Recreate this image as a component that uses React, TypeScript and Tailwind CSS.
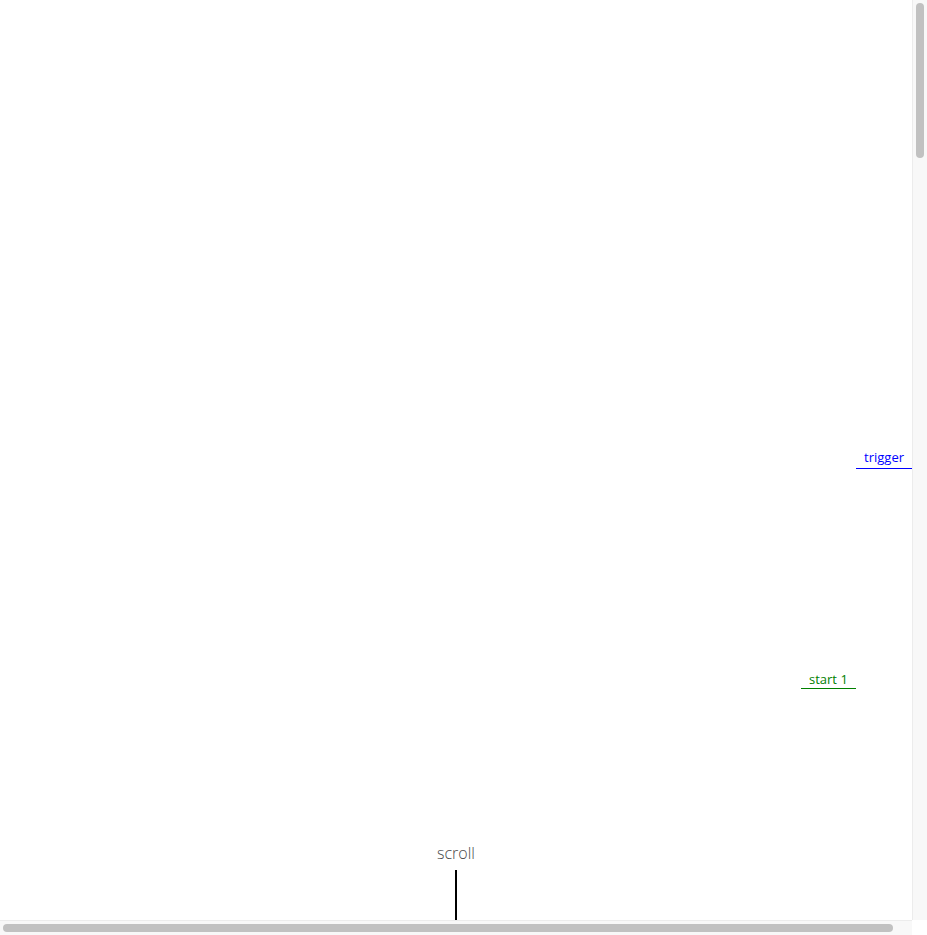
export default function App() {
  return (
    <div className="flex h-[935px] w-[927px] flex-col overflow-hidden bg-white font-['Open_Sans',sans-serif]">
      <div className="flex h-[920px] flex-row">
        {/* page content */}
        <div className="relative flex flex-1 flex-col items-center justify-end">
          {/* trigger marker */}
          <div className="absolute right-0 top-[444px] whitespace-nowrap border-b border-b-[#0000ff] px-2 pt-1 pb-[2px] text-[13px] leading-[18px] text-[#0000ff]">
            trigger
          </div>

          {/* scroller start marker */}
          <div className="absolute left-[801px] top-[666px] whitespace-nowrap border-b border-b-[#008000] px-2 pt-1 pb-0 text-[13px] leading-[18px] text-[#008000]">
            start 1
          </div>

          {/* scroll hint */}
          <span className="text-[16px] leading-[22px] font-light text-[#4a4a4a]">scroll</span>
          <div className="mt-[6px] h-[50px] w-[2px] bg-black" />
        </div>

        {/* vertical scrollbar */}
        <div className="flex w-[15px] flex-col border-l border-[#ececec] bg-[#f8f8f8] pt-[3px] pl-[3px]">
          <div className="h-[155px] w-[8px] rounded-full bg-[#c1c1c1]" />
        </div>
      </div>

      {/* horizontal scrollbar */}
      <div className="flex h-[15px] flex-row">
        <div className="flex flex-1 items-start border-t border-[#ececec] bg-[#f8f8f8] pt-[3px] pl-[3px]">
          <div className="h-[8px] w-[890px] rounded-full bg-[#c1c1c1]" />
        </div>
        <div className="w-[15px] bg-white" />
      </div>
    </div>
  );
}
